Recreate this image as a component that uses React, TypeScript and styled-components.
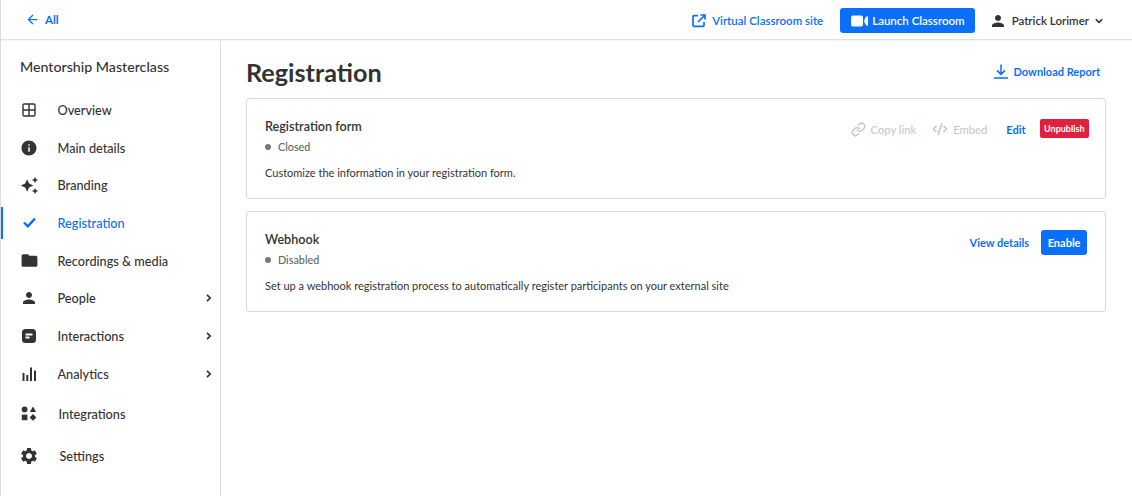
import * as React from 'react';
import styled, { createGlobalStyle } from 'styled-components';
import { Code2, Link as LinkIcon } from 'lucide-react';
import { MdArrowBack, MdAutoAwesome, MdFolder, MdInfo, MdPerson, MdSettings } from 'react-icons/md';

const BLUE = '#0a6ffb';
const INK = '#333333';

const GlobalStyle = createGlobalStyle`
  html, body {
    margin: 0;
    padding: 0;
    background: #fff;
    font-family: Lato, "Liberation Sans", sans-serif;
    color: ${INK};
  }
  * { box-sizing: border-box; }
`;

const OverviewIcon = () => (
  <svg width="14" height="14" viewBox="0 0 14 14" fill="none" stroke="currentColor" strokeWidth="1.4">
    <rect x="1" y="1" width="12" height="12" rx="1.2" />
    <path d="M7 1v12M1 7h12" />
  </svg>
);

const CheckIcon = () => (
  <svg width="13" height="11" viewBox="0 0 13 11" fill="none" stroke="currentColor" strokeWidth="2.4">
    <path d="M1 5.5l3.8 3.8L12 1.6" />
  </svg>
);

const InteractionsIcon = () => (
  <svg width="16" height="16" viewBox="0 0 16 16">
    <path
      fill="currentColor"
      d="M4.5 1h7A3.5 3.5 0 0 1 15 4.5v7a3.5 3.5 0 0 1-3.5 3.5h-7A3.5 3.5 0 0 1 1 11.5v-7A3.5 3.5 0 0 1 4.5 1z"
    />
    <path fill="#fff" d="M4.5 5.6h7v1.8h-7zM4.5 8.6h4v1.8h-4z" />
  </svg>
);

const AnalyticsIcon = () => (
  <svg width="15" height="14" viewBox="0 0 15 14" fill="currentColor">
    <rect x="0.5" y="6" width="2" height="8" />
    <rect x="4.3" y="8" width="2" height="6" />
    <rect x="8" y="0.5" width="2" height="13.5" />
    <rect x="12" y="3.5" width="2" height="10.5" />
  </svg>
);

const IntegrationsIcon = () => (
  <svg width="16" height="15" viewBox="0 0 16 15" fill="currentColor">
    <circle cx="3.6" cy="3.4" r="2.9" />
    <path d="M12 0.6l3.2 5.4H8.8z" />
    <rect x="0.8" y="8.6" width="5.6" height="5.6" />
    <path d="M12 8l3.4 3.4L12 14.8l-3.4-3.4z" />
  </svg>
);

const VideoIcon = () => (
  <svg width="17" height="12" viewBox="0 0 17 12" fill="currentColor">
    <rect x="0" y="0.5" width="12" height="11" rx="2" />
    <path d="M13.4 4.4L15.4 1.6c.5-.6 1.6-.3 1.6.5v7.8c0 .8-1.1 1.1-1.6.5l-2-2.8z" />
  </svg>
);

const DownloadIcon = () => (
  <svg width="14" height="15" viewBox="0 0 14 15" fill="none" stroke="currentColor" strokeWidth="1.5">
    <path d="M7 0.5v9.5M3 6.4l4 4 4-4M0 14h14" />
  </svg>
);

const ExternalIcon = () => (
  <svg width="14" height="14" viewBox="0 0 14 14" fill="none" stroke="currentColor" strokeWidth="1.7">
    <path d="M6 1.6H2.2a1.2 1.2 0 0 0-1.2 1.2v8.4a1.2 1.2 0 0 0 1.2 1.2h8.6a1.2 1.2 0 0 0 1.2-1.2V8" />
    <path d="M8.4 1H13v4.6M13 1L6 8" />
  </svg>
);

const ChevronRight = () => (
  <svg width="6" height="8" viewBox="0 0 6 8" fill="none" stroke="currentColor" strokeWidth="1.7">
    <path d="M1 0.8L4.2 4 1 7.2" />
  </svg>
);

const ChevronDown = () => (
  <svg width="8" height="6" viewBox="0 0 8 6" fill="none" stroke="currentColor" strokeWidth="1.6">
    <path d="M0.8 1.2L4 4.4l3.2-3.2" />
  </svg>
);

const navItems = [
  { label: 'Overview', icon: <OverviewIcon /> },
  { label: 'Main details', icon: <MdInfo size={18} /> },
  { label: 'Branding', icon: <MdAutoAwesome size={19} /> },
  { label: 'Registration', icon: <CheckIcon />, active: true },
  { label: 'Recordings & media', icon: <MdFolder size={19} /> },
  { label: 'People', icon: <MdPerson size={18} />, more: true },
  { label: 'Interactions', icon: <InteractionsIcon />, more: true },
  { label: 'Analytics', icon: <AnalyticsIcon />, more: true },
  { label: 'Integrations', icon: <IntegrationsIcon />, tall: 42, indent: 1 },
  { label: 'Settings', icon: <MdSettings size={20} />, tall: 42, indent: 2 },
];

const App: React.FunctionComponent = () => {
  return (
    <>
      <GlobalStyle />
      <Page>
        <TopBar>
          <BackLink>
            <MdArrowBack size={15} />
            All
          </BackLink>
          <TopActions>
            <SiteLink>
              <ExternalIcon />
              Virtual Classroom site
            </SiteLink>
            <LaunchButton>
              <VideoIcon />
              Launch Classroom
            </LaunchButton>
            <UserMenu>
              <MdPerson size={18} />
              <UserName>Patrick Lorimer</UserName>
              <ChevronDown />
            </UserMenu>
          </TopActions>
        </TopBar>
        <Body>
          <Sidebar>
            <CourseTitle>Mentorship Masterclass</CourseTitle>
            <Nav>
              {navItems.map((item) => (
                <NavRow key={item.label} $active={item.active} $height={item.tall}>
                  <NavIcon>{item.icon}</NavIcon>
                  <NavLabel $indent={item.indent}>{item.label}</NavLabel>
                  {item.more && (
                    <NavMore>
                      <ChevronRight />
                    </NavMore>
                  )}
                </NavRow>
              ))}
            </Nav>
          </Sidebar>
          <Main>
            <TitleRow>
              <PageTitle>Registration</PageTitle>
              <DownloadLink>
                <DownloadIcon />
                Download Report
              </DownloadLink>
            </TitleRow>
            <Card>
              <CardHead>
                <CardTitle>Registration form</CardTitle>
                <CardActions>
                  <MutedAction $trail={4}>
                    <LinkIcon size={15} strokeWidth={2.4} />
                    Copy link
                  </MutedAction>
                  <MutedAction $trail={7}>
                    <Code2 size={16} strokeWidth={2.6} />
                    Embed
                  </MutedAction>
                  <TextAction>Edit</TextAction>
                  <UnpublishButton>Unpublish</UnpublishButton>
                </CardActions>
              </CardHead>
              <Status>
                <StatusDot />
                Closed
              </Status>
              <CardText>Customize the information in your registration form.</CardText>
            </Card>
            <Card>
              <CardHead>
                <CardTitle>Webhook</CardTitle>
                <CardActions>
                  <TextAction>View details</TextAction>
                  <EnableButton>Enable</EnableButton>
                </CardActions>
              </CardHead>
              <Status>
                <StatusDot />
                Disabled
              </Status>
              <CardText>
                Set up a webhook registration process to automatically register participants on your
                external site
              </CardText>
            </Card>
          </Main>
        </Body>
      </Page>
    </>
  );
};

const Page = styled.div`
  display: flex;
  flex-direction: column;
  width: 1132px;
  height: 496px;
  overflow: hidden;
  border-left: 1px solid #dcdcdc;
`;

const TopBar = styled.header`
  display: flex;
  flex: none;
  align-items: center;
  justify-content: space-between;
  height: 40px;
  padding: 0 29px 0 24px;
  border-bottom: 1px solid #e2e2e2;
  box-shadow: 0 1px 1px rgba(0, 0, 0, 0.04);
`;

const BackLink = styled.a`
  display: flex;
  align-items: center;
  gap: 5px;
  color: ${BLUE};
  font-size: 11.5px;
  font-weight: 700;
`;

const TopActions = styled.div`
  display: flex;
  align-items: center;
  margin-top: 2px;
`;

const SiteLink = styled.a`
  display: flex;
  align-items: center;
  gap: 6px;
  margin-right: 17px;
  color: ${BLUE};
  font-size: 11.5px;
  font-weight: 600;
`;

const LaunchButton = styled.button`
  display: flex;
  align-items: center;
  gap: 4px;
  height: 25px;
  margin-right: 14px;
  padding: 0 10px 0 11px;
  border: 0;
  border-radius: 3px;
  background: ${BLUE};
  color: #fff;
  font-family: inherit;
  font-size: 11.5px;
  font-weight: 600;
`;

const UserMenu = styled.div`
  display: flex;
  align-items: center;
  color: ${INK};
`;

const UserName = styled.span`
  margin: 0 6px 0 5px;
  font-size: 11.5px;
  font-weight: 600;
`;

const Body = styled.div`
  display: flex;
  flex: 1;
  min-height: 0;
`;

const Sidebar = styled.aside`
  flex: none;
  width: 220px;
  padding-top: 18px;
  border-right: 1px solid #dcdcdc;
`;

const CourseTitle = styled.div`
  margin-bottom: 15px;
  padding-left: 19px;
  font-size: 14.2px;
  font-weight: 500;
  line-height: 18px;
`;

const Nav = styled.nav`
  display: flex;
  flex-direction: column;
`;

const NavRow = styled.a<{ $active?: boolean; $height?: number }>`
  position: relative;
  display: flex;
  align-items: center;
  height: ${({ $height }) => $height ?? 37.7}px;
  padding-right: 8px;
  color: ${({ $active }) => ($active ? BLUE : INK)};

  &::before {
    content: ${({ $active }) => ($active ? '""' : 'none')};
    position: absolute;
    top: 3px;
    left: 0;
    width: 2px;
    height: 32px;
    background: ${BLUE};
  }
`;

const NavIcon = styled.span`
  display: flex;
  flex: none;
  align-items: center;
  justify-content: center;
  width: 20px;
  margin-left: 18px;
`;

const NavLabel = styled.span<{ $indent?: number }>`
  flex: 1;
  margin-left: ${({ $indent }) => 18.5 + ($indent ?? 0)}px;
  font-size: 12.7px;
  font-weight: 500;
`;

const NavMore = styled.span`
  display: flex;
  color: ${INK};
`;

const Main = styled.main`
  flex: 1;
  min-width: 0;
  padding: 0 26px 0 25px;
`;

const TitleRow = styled.div`
  display: flex;
  align-items: center;
  justify-content: space-between;
  height: 58px;
  padding: 6px 6px 0 0;
`;

const PageTitle = styled.h1`
  margin: 0;
  font-size: 25.2px;
  font-weight: 700;
  color: ${INK};
`;

const DownloadLink = styled.a`
  display: flex;
  align-items: center;
  gap: 6px;
  margin-top: -2px;
  color: ${BLUE};
  font-size: 11px;
  font-weight: 700;
`;

const Card = styled.section`
  height: 101px;
  margin-bottom: 12px;
  padding: 18px 16px 0 18px;
  border: 1px solid #d9d9d9;
  border-radius: 3px;
`;

const CardHead = styled.div`
  display: flex;
  align-items: center;
  justify-content: space-between;
  height: 18px;
`;

const CardTitle = styled.h2`
  margin: 0;
  font-size: 12.6px;
  font-weight: 600;
`;

const CardActions = styled.div`
  display: flex;
  align-items: center;
  gap: 12px;
  margin-top: 6px;
`;

const MutedAction = styled.span<{ $trail: number }>`
  display: flex;
  align-items: center;
  gap: 5px;
  margin-right: ${({ $trail }) => $trail}px;
  color: #c9c9c9;
  font-size: 11.2px;
  font-weight: 500;
`;

const TextAction = styled.a`
  color: ${BLUE};
  font-size: 11px;
  font-weight: 700;
`;

const UnpublishButton = styled.button`
  height: 19px;
  margin: -2px 0 0 2px;
  padding: 0 4.5px;
  border: 0;
  border-radius: 2px;
  background: #e0203c;
  color: #fff;
  font-family: inherit;
  font-size: 9px;
  font-weight: 700;
`;

const EnableButton = styled.button`
  height: 25px;
  margin-right: 2px;
  padding: 0 6.5px;
  border: 0;
  border-radius: 3px;
  background: ${BLUE};
  color: #fff;
  font-family: inherit;
  font-size: 11px;
  font-weight: 700;
`;

const Status = styled.div`
  display: flex;
  align-items: center;
  gap: 7px;
  margin-top: 5px;
  color: #666;
  font-size: 10.8px;
  font-weight: 500;
  line-height: 14px;
`;

const StatusDot = styled.span`
  width: 6px;
  height: 6px;
  border-radius: 50%;
  background: #777;
`;

const CardText = styled.p`
  margin: 12px 0 0;
  color: ${INK};
  font-size: 11px;
  line-height: 14px;
`;

export default App;
